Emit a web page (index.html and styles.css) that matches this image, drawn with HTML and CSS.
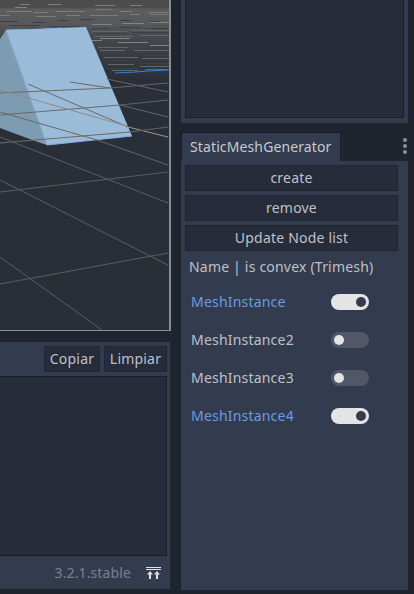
FILE: index.html
```html
<!DOCTYPE html>
<html lang="en">
<head>
    <meta charset="UTF-8">
    <title>StaticMeshGenerator</title>
    <link rel="stylesheet" href="styles.css">
</head>
<body>
    <div class="editor">
        <div class="left-col">
            <div class="viewport">
                <svg class="scene" width="169" height="330" viewBox="0 0 169 330">
                    <defs>
                        <linearGradient id="sky" x1="0" y1="0" x2="0" y2="1">
                            <stop offset="0" stop-color="#4c4b49"/>
                            <stop offset="0.1" stop-color="#4f4e4d"/>
                            <stop offset="0.11" stop-color="#5c5d5f"/>
                            <stop offset="0.3" stop-color="#56585a"/>
                            <stop offset="0.45" stop-color="#464a4e"/>
                            <stop offset="0.7" stop-color="#383c42"/>
                            <stop offset="1" stop-color="#2a2f37"/>
                        </linearGradient>
                    </defs>
                    <rect x="0" y="0" width="169" height="80" fill="url(#sky)"/>
                    <g stroke="#7c7c7d" fill="none">
                        <path d="M20 4.500h10M48 4.500h14M95 5.500h20M130 5.500h12M6 11.500h26M34 12.500h14M55 11.500h30M96 9.500h15M120 11.500h12M148 12.500h20M0 15.500h10M36 16.500h20M66 15.500h14M90 15.500h28M130 14.500h10M150 14.500h19"/>
                    </g>
                    <g stroke="#828283" fill="none">
                        <path d="M15 7.500h12M92 24.500h20M122 23.500h22M150 22.500h19M100 38.500h30M118 42.500h30M150 45.500h19M90 40.500h12"/>
                    </g>
                    <g stroke="#3d4046" fill="none">
                        <path d="M0 21.500h18M32 22.500h14M58 20.500h10M80 19.500h14M120 20.500h12M150 21.500h10M10 25.500h30M50 26.500h30M92 28.500h18M120 27.500h22M150 28.500h19M96 33.500h30M132 32.500h37M100 44.500h18M130 48.500h39M102 53.500h30M140 55.500h29M108 60.500h24M140 63.500h29M110 68.500h30"/>
                    </g>
                    <g stroke="#656668" fill="none">
                        <path d="M92 31.500h35M132 30.500h37M94 36.500h40M140 35.500h29M98 47.500h30M134 50.500h35M100 50.500h25M104 57.500h34M142 58.500h27M108 64.500h26M140 66.500h29M112 70.500h26M145 69.500h24"/>
                    </g>
                    <path d="M115 73L135 72L148 71L168 70" stroke="#2a86e8" stroke-width="1.200" fill="none"/>
                    <path d="M0 79.500h3" stroke="#2a86e8"/>
                    <polygon points="0,39 6,30 47,145 35,141 0,128" fill="#7d9cb1"/>
                    <polygon points="6,30 86,27 132,136 47,145" fill="#9abcd9"/>
                    <path d="M6 30L47 145L132 136M6 30L26 29.500M44 29L62 28" stroke="#86aee8" fill="none"/>
                    <g stroke="#6d6865" fill="none">
                        <path d="M28 84L128 127M70 82L110 88M0 93L110 88M0 115L120 105M0 112L97 140M0 143L130 132"/>
                    </g>
                    <path d="M0 90L127 126" stroke="#8d8a86" fill="none"/>
                    <path d="M128 127L168 137" stroke="#9a9a9a" fill="none"/>
                    <g stroke="#64646a" fill="none">
                        <path d="M107 79L168 92M110 88L168 83M120 105L168 100M120 105L168 117M130 132L168 127M97 140L168 165"/>
                    </g>
                    <g stroke="#5c5e60" fill="none">
                        <path d="M0 137L168 203M0 180L168 265M0 192L168 172M0 284L168 253M0 257L102 330"/>
                    </g>
                </svg>
            </div>
            <div class="console">
                <div class="console-bar">
                    <button class="btn btn-small">Copiar</button>
                    <button class="btn btn-small">Limpiar</button>
                </div>
                <div class="well log"></div>
                <div class="status">
                    <span class="version">3.2.1.stable</span>
                    <svg class="up-icon" width="15" height="12" viewBox="0 0 15 12">
                        <path d="M0 .5h15M0 2.500h15" stroke="#e0e0e0" fill="none"/>
                        <path d="M4 4L1 7.500h2V12h2V7.500h2zM11 4L8 7.500h2V12h2V7.500h2z" fill="#e0e0e0"/>
                    </svg>
                </div>
            </div>
        </div>
        <div class="right-col">
            <div class="top-panel">
                <div class="well tree"></div>
            </div>
            <div class="tab-row">
                <div class="tab">StaticMeshGenerator</div>
                <div class="menu-dots"><i></i><i></i><i></i></div>
            </div>
            <div class="dock">
                <button class="btn btn-wide">create</button>
                <button class="btn btn-wide">remove</button>
                <button class="btn btn-wide">Update Node list</button>
                <div class="dock-label">Name | is convex (Trimesh)</div>
                <div class="mesh-row on"><span>MeshInstance</span><div class="toggle"></div></div>
                <div class="mesh-row"><span>MeshInstance2</span><div class="toggle"></div></div>
                <div class="mesh-row"><span>MeshInstance3</span><div class="toggle"></div></div>
                <div class="mesh-row on"><span>MeshInstance4</span><div class="toggle"></div></div>
            </div>
        </div>
    </div>
</body>
</html>
```

FILE: styles.css
```css
* {
    box-sizing: border-box;
}

html, body {
    margin: 0;
    height: 100%;
    overflow: hidden;
}

body {
    background-color: #20242f;
    font-family: "Noto Sans", sans-serif;
    font-size: 14px;
    letter-spacing: 0.12px;
    color: #bfc1c6;
}

.editor {
    display: flex;
    width: 414px;
    height: 594px;
}

.left-col {
    width: 171px;
    margin-right: 10px;
    display: flex;
    flex-direction: column;
}

.viewport {
    height: 331px;
    background-color: #2a2f37;
    border-right: 2px solid #8b8e95;
    border-bottom: 1px solid #8b8e95;
    overflow: hidden;
}

.scene {
    display: block;
}

.console {
    margin-top: 10px;
    height: 249px;
    background-color: #333b4f;
    border: 1px solid #20242f;
    border-left: 0;
    padding: 4px 3px 0 0;
    display: flex;
    flex-direction: column;
}

.console-bar {
    display: flex;
    justify-content: flex-end;
    gap: 4px;
    height: 26px;
}

.well {
    background-color: #272c3b;
    border: 1px solid #1b1e28;
}

.log {
    margin-top: 4px;
    height: 180px;
    border-left: 0;
}

.status {
    flex: 1;
    display: flex;
    align-items: center;
    justify-content: flex-end;
    padding-right: 6px;
}

.version {
    color: #7c808c;
    margin-right: 15px;
}

.up-icon {
    display: block;
}

.btn {
    font-family: inherit;
    font-size: 14px;
    letter-spacing: 0.2px;
    color: #bfc1c6;
    background-color: #272c3b;
    border: 1px solid #222632;
    padding: 0 0 2px 0;
    height: 26px;
}

.btn-small:first-child {
    width: 56px;
}

.btn-small {
    width: 63px;
}

.btn-wide {
    display: block;
    width: 213px;
    margin-bottom: 4px;
}

.right-col {
    width: 227px;
    display: flex;
    flex-direction: column;
}

.top-panel {
    height: 123px;
    background-color: #333b4f;
    padding: 0 4px 5px 4px;
}

.tree {
    height: 100%;
    border-top: 0;
}

.tab-row {
    margin-top: 9px;
    height: 29px;
    display: flex;
    justify-content: space-between;
}

.tab {
    width: 160px;
    background-color: #333b4f;
    border: 1px solid #1b1e28;
    border-bottom: 0;
    padding-left: 8px;
    line-height: 27px;
    color: #c8cace;
}

.menu-dots {
    display: flex;
    flex-direction: column;
    gap: 2px;
    padding-top: 6px;
    margin-right: 1px;
}

.menu-dots i {
    display: block;
    width: 4px;
    height: 4px;
    border-radius: 50%;
    background-color: #8d9097;
}

.dock {
    height: 429px;
    background-color: #333b4f;
    padding: 4px 10px 0 4px;
}

.dock-label {
    margin-top: 6px;
    padding-left: 4px;
    line-height: 20px;
    letter-spacing: 0.2px;
}

.mesh-row {
    display: flex;
    align-items: center;
    justify-content: space-between;
    height: 38px;
    padding: 0 29px 0 6px;
    letter-spacing: 0.2px;
}

.dock-label + .mesh-row {
    margin-top: 5px;
}

.mesh-row.on span {
    color: #6a9be0;
}

.toggle {
    position: relative;
    width: 38px;
    height: 16px;
    margin-top: 1px;
    border-radius: 8px;
    background-color: #515766;
}

.toggle::after {
    content: "";
    position: absolute;
    top: 3px;
    left: 3px;
    width: 10px;
    height: 10px;
    border-radius: 50%;
    background-color: #e4e4e4;
}

.mesh-row.on .toggle {
    background-color: #e4e4e4;
}

.mesh-row.on .toggle::after {
    left: 25px;
    background-color: #333b4f;
}
```
